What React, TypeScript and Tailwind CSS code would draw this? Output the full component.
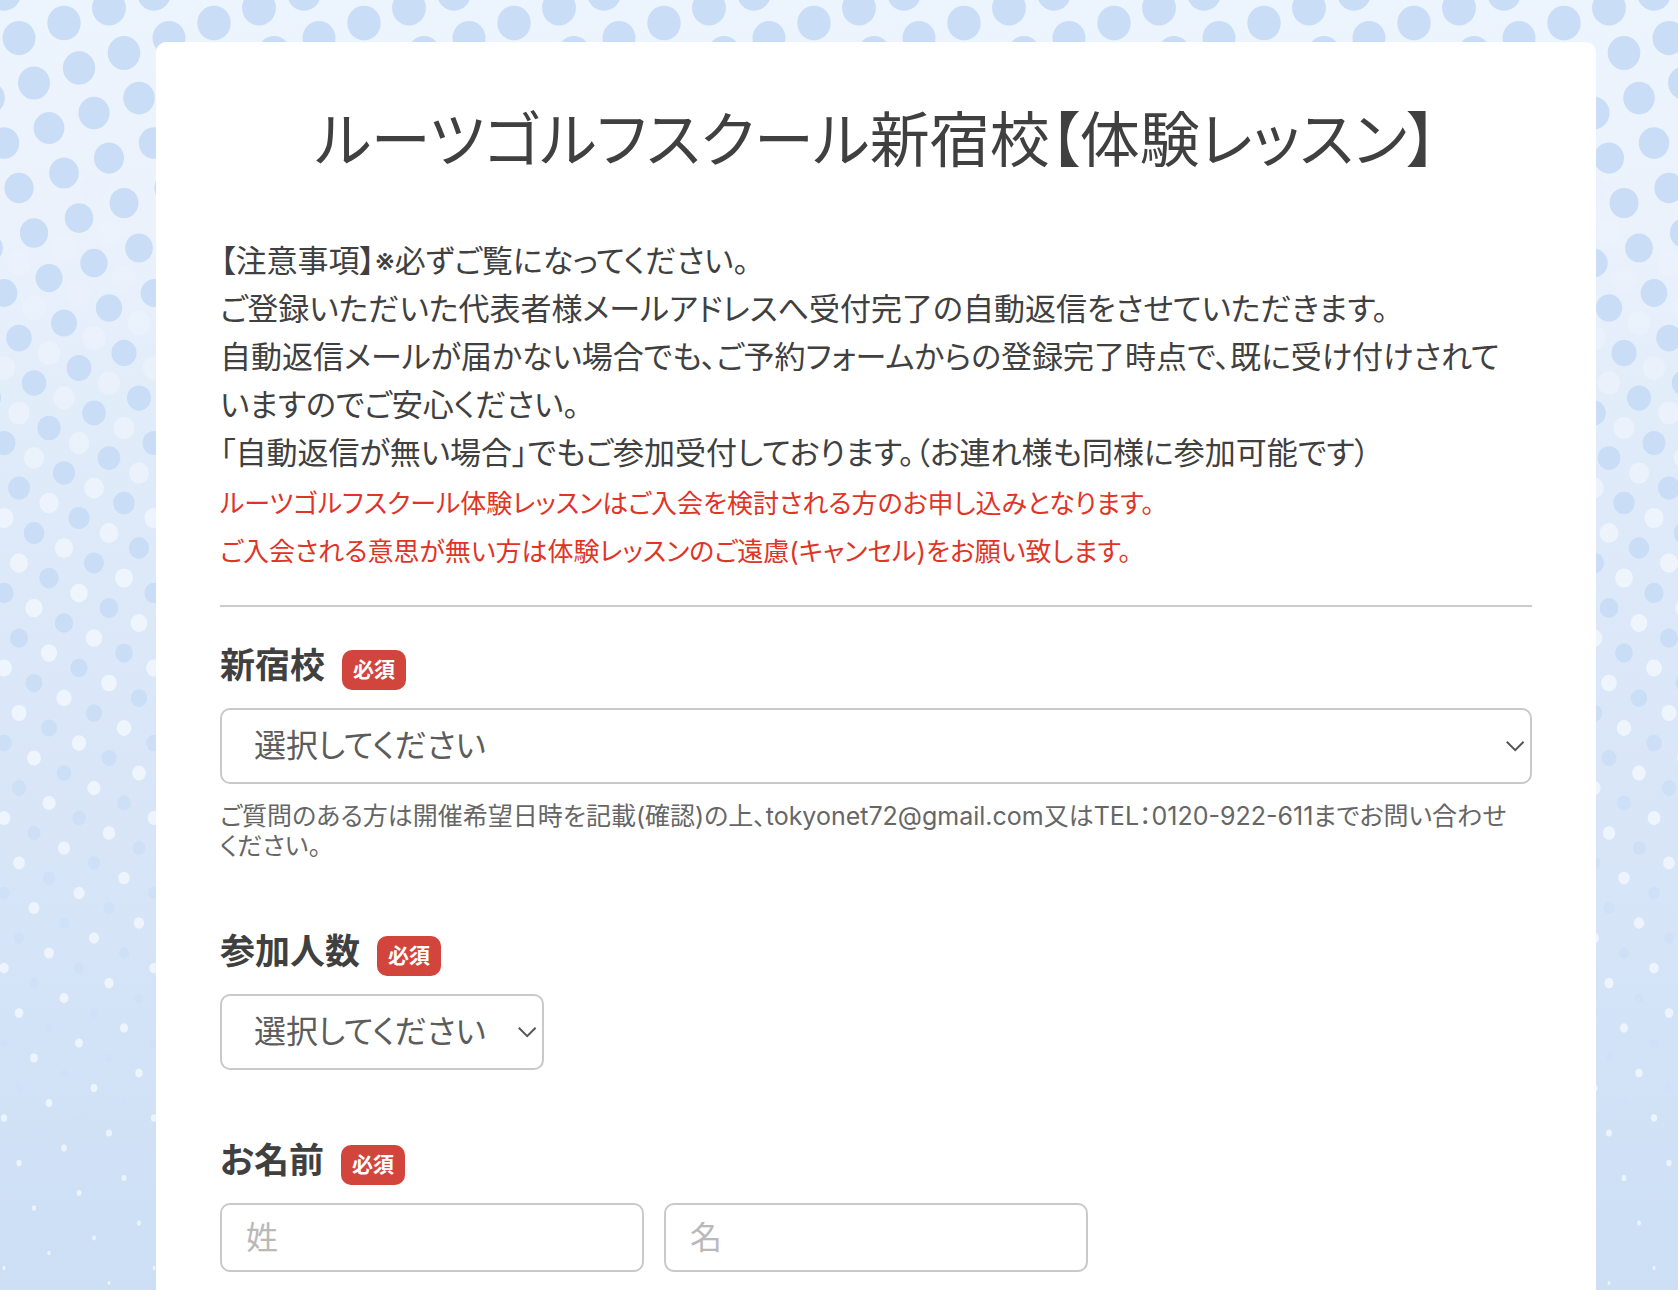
import { useId, type ReactNode } from "react";

const TILE = 150;
const TILE_HEIGHT = 1350;

// Dots sit on a slanted lattice with steps (45, -15) and (15, 45).
function latticePoints(originX: number, originY: number) {
  const points: { x: number; y: number }[] = [];
  for (let i = -40; i <= 40; i++) {
    for (let j = -40; j <= 40; j++) {
      const x = originX + i * 45 + j * 15;
      const y = originY - i * 15 + j * 45;
      if (x > -20 && x < TILE + 20 && y > -20 && y < TILE_HEIGHT) points.push({ x, y });
    }
  }
  return points;
}

const blueDots = latticePoints(19, 38);
const whiteDots = latticePoints(49, 53);

function blueOpacity(y: number) {
  return y < 650 ? 1 : Math.max(0, 1 - (y - 650) / 550);
}

function whiteOpacity(y: number) {
  if (y < 170) return 0;
  return Math.min(0.75, ((y - 170) / 400) * 0.75);
}

function DottedBackdrop() {
  return (
    <svg className="absolute inset-0 h-full w-full" aria-hidden="true">
      <defs>
        <linearGradient id="sky" x1="0" y1="0" x2="0" y2={1290} gradientUnits="userSpaceOnUse">
          <stop offset="0" stopColor="#ecf4fd" />
          <stop offset="0.17" stopColor="#ebf2fc" />
          <stop offset="0.35" stopColor="#dfebf9" />
          <stop offset="0.6" stopColor="#d9e6f8" />
          <stop offset="0.8" stopColor="#d3e3f7" />
          <stop offset="1" stopColor="#ccdff5" />
        </linearGradient>
        <pattern id="dots" width={TILE} height={TILE_HEIGHT} patternUnits="userSpaceOnUse">
          {whiteDots.map(({ x, y }) => (
            <ellipse
              key={`w${x},${y}`}
              cx={x}
              cy={y}
              rx={Math.max(0, 15 - 0.0106 * y)}
              ry={Math.max(0, 15.6 - 0.0106 * y)}
              fill="#f5f9fe"
              opacity={whiteOpacity(y)}
            />
          ))}
          {blueDots.map(({ x, y }) => (
            <ellipse
              key={`b${x},${y}`}
              cx={x}
              cy={y}
              rx={Math.max(0, 17 - 0.0125 * y)}
              ry={Math.max(0, 17.6 - 0.0125 * y)}
              fill="#c9ddf6"
              opacity={blueOpacity(y)}
            />
          ))}
        </pattern>
      </defs>
      <rect width="100%" height="100%" fill="url(#sky)" />
      <rect width="100%" height="100%" fill="url(#dots)" />
    </svg>
  );
}

function FieldLabel({ htmlFor, children }: { htmlFor: string; children: ReactNode }) {
  return (
    <div className="mb-[18px] flex items-start gap-[17px]">
      <label htmlFor={htmlFor} className="text-[35px] leading-[30px] font-bold">
        {children}
      </label>
      <span className="rounded-[10px] bg-[#d2453d] px-[11px] text-[21px] leading-10 font-bold text-white">
        必須
      </span>
    </div>
  );
}

function SelectBox({ id, className }: { id: string; className: string }) {
  return (
    <div className={`relative ${className}`}>
      <select
        id={id}
        className="block h-[76px] w-full appearance-none rounded-[10px] border-2 border-[#c9c9c9] bg-white pr-14 pl-8 text-[32px] text-[#5c5c5c]"
      >
        <option>選択してください</option>
      </select>
      <svg
        className="pointer-events-none absolute top-8 right-[7px] h-3 w-5"
        viewBox="0 0 20 12"
        fill="none"
        stroke="#555"
        strokeWidth="2"
        aria-hidden="true"
      >
        <path d="M1.8 1.8 10.2 10.2 18.6 1.8" />
      </svg>
    </div>
  );
}

const inputClass =
  "h-[69px] w-[424px] min-w-0 rounded-[10px] border-2 border-[#c9c9c9] bg-white px-6 text-[32px] placeholder:text-[#b9b9b9]";

export default function App() {
  const school = useId();
  const people = useId();
  const name = useId();

  return (
    <div
      lang="ja"
      className="relative isolate flex min-h-screen flex-col overflow-hidden pt-[42px] pr-[82px] pl-[156px] font-['Inter','Noto_Sans_CJK_JP',sans-serif] text-[#404040] [font-feature-settings:'palt']"
    >
      <DottedBackdrop />
      <main className="relative grow rounded-t-[10px] bg-white px-16 pt-[50px] pb-4">
        <h1 className="text-center text-[60px] leading-[96px]">ルーツゴルフスクール新宿校【体験レッスン】</h1>

        <div className="mt-[49px] border-b-2 border-[#cccccc] pb-[29px] text-[31px] leading-[48px]">
          <p>【注意事項】※必ずご覧になってください。</p>
          <p>ご登録いただいた代表者様メールアドレスへ受付完了の自動返信をさせていただきます。</p>
          <p>
            自動返信メールが届かない場合でも、ご予約フォームからの登録完了時点で、既に受け付けされて
            <br />
            いますのでご安心ください。
          </p>
          <p>「自動返信が無い場合」でもご参加受付しております。（お連れ様も同様に参加可能です）</p>
          <p className="mt-[3px] text-[26px] text-[#e03427]">
            ルーツゴルフスクール体験レッスンはご入会を検討される方のお申し込みとなります。
            <br />
            ご入会される意思が無い方は体験レッスンのご遠慮(キャンセル)をお願い致します。
          </p>
        </div>

        <form className="mt-[43px] flex flex-col gap-[75px]">
          <div>
            <FieldLabel htmlFor={school}>新宿校</FieldLabel>
            <SelectBox id={school} className="w-full" />
            <p className="mt-[17px] text-[25px] leading-[30px] text-[#666666]">
              ご質問のある方は開催希望日時を記載(確認)の上、tokyonet72@gmail.com又はTEL：0120-922-611までお問い合わせ
              <br />
              ください。
            </p>
          </div>

          <div>
            <FieldLabel htmlFor={people}>参加人数</FieldLabel>
            <SelectBox id={people} className="w-[324px]" />
          </div>

          <div>
            <FieldLabel htmlFor={name}>お名前</FieldLabel>
            <div className="flex gap-5">
              <input id={name} type="text" placeholder="姓" className={inputClass} />
              <input type="text" placeholder="名" aria-label="名" className={inputClass} />
            </div>
          </div>
        </form>
      </main>
    </div>
  );
}
